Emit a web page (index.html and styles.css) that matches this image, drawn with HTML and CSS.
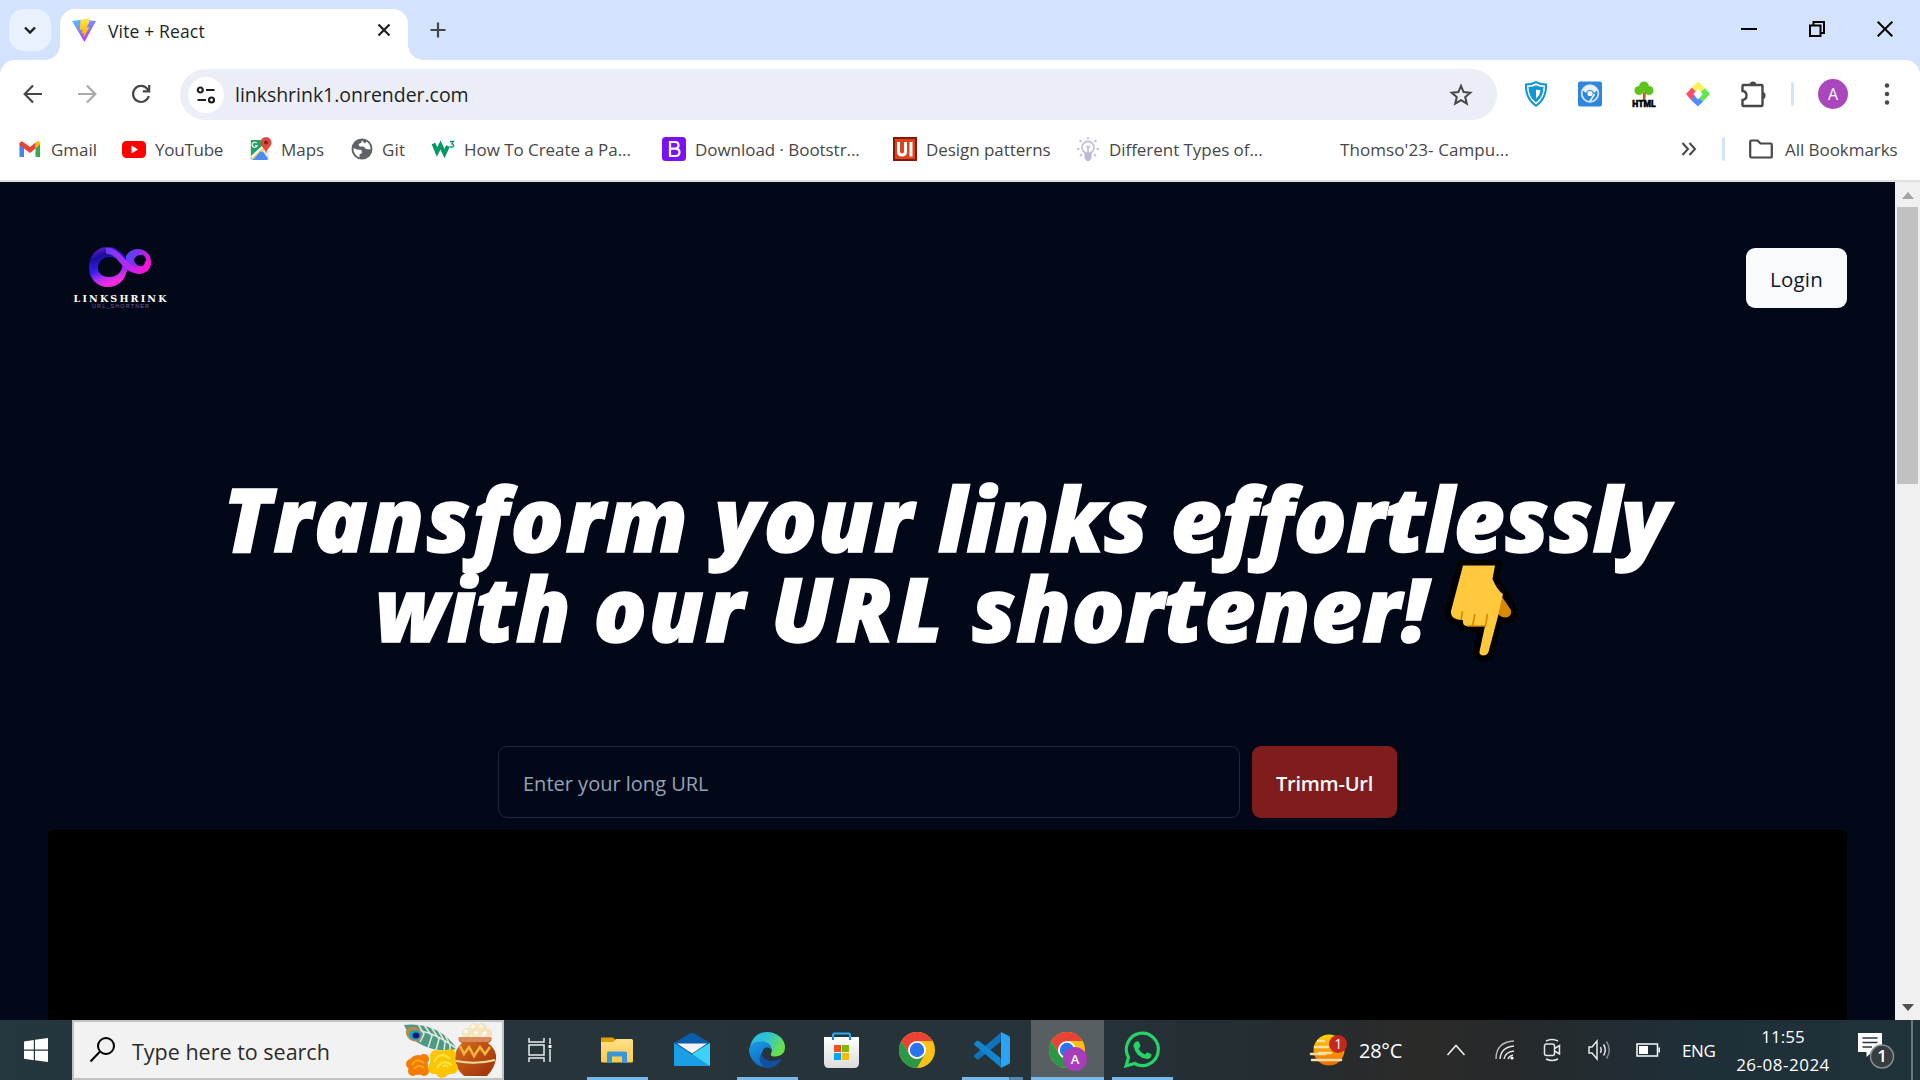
FILE: index.html
```html
<!DOCTYPE html>
<html lang="en">
<head>
<meta charset="utf-8">
<title>Vite + React</title>
<link rel="stylesheet" href="styles.css">
</head>
<body>
<svg class="defs" width="0" height="0">
  <defs>
    <linearGradient id="viteA" x1="0" y1="0" x2=".6" y2="1"><stop offset="0" stop-color="#41d1ff"/><stop offset="1" stop-color="#bd34fe"/></linearGradient>
    <linearGradient id="viteB" x1="0" y1="0" x2="0" y2="1"><stop offset="0" stop-color="#ffea83"/><stop offset=".2" stop-color="#ffdd35"/><stop offset="1" stop-color="#ffa800"/></linearGradient>
    <linearGradient id="loopA" x1="0" y1="0" x2=".35" y2="1"><stop offset="0" stop-color="#7a2be8"/><stop offset=".3" stop-color="#1c0c9c"/><stop offset=".6" stop-color="#3a1cf0"/><stop offset=".8" stop-color="#b02cf0"/><stop offset="1" stop-color="#ff2be0"/></linearGradient>
    <linearGradient id="loopB" x1="0" y1="0" x2="1" y2="0"><stop offset="0" stop-color="#6a3cf0"/><stop offset=".45" stop-color="#b02cf0"/><stop offset="1" stop-color="#ff10d8"/></linearGradient>
    <linearGradient id="loopC" x1="0" y1="0" x2="1" y2=".5"><stop offset="0" stop-color="#3a4cf8"/><stop offset=".5" stop-color="#8a2cf0"/><stop offset="1" stop-color="#ff10d8"/></linearGradient>
    <linearGradient id="edgeA" x1="0" y1="0" x2="1" y2=".4"><stop offset="0" stop-color="#2fb6ec"/><stop offset=".5" stop-color="#2cc3d8"/><stop offset="1" stop-color="#6be04f"/></linearGradient>
    <linearGradient id="edgeB" x1="0" y1="0" x2=".6" y2="1"><stop offset="0" stop-color="#1b9de2"/><stop offset="1" stop-color="#0c66c4"/></linearGradient>
    <linearGradient id="sun" x1="0" y1="0" x2="0" y2="1"><stop offset="0" stop-color="#ffd000"/><stop offset="1" stop-color="#ee6a00"/></linearGradient>
    <linearGradient id="folder" x1="0" y1="0" x2="0" y2="1"><stop offset="0" stop-color="#ffe08a"/><stop offset="1" stop-color="#fccb45"/></linearGradient>
    <linearGradient id="bag" x1="0" y1="0" x2="0" y2="1"><stop offset="0" stop-color="#fff"/><stop offset="1" stop-color="#dcdcdc"/></linearGradient>
    <linearGradient id="pot" x1="0" y1="0" x2="1" y2="1"><stop offset="0" stop-color="#d9701f"/><stop offset="1" stop-color="#9c2d08"/></linearGradient>
    <symbol id="chrome" viewBox="0 0 36 36">
      <circle cx="18" cy="18" r="18" fill="#fbc116"/>
      <path d="M2.4 9A18 18 0 0 1 33.6 9L18 9 10.2 13.5 10.2 22.5Z" fill="#ea4335"/>
      <path d="M2.4 9 10.2 22.5 14 26 18 27 25.8 22.5 18 36A18 18 0 0 1 2.4 9Z" fill="#2a9846"/>
      <circle cx="18" cy="18" r="9" fill="#fff"/><circle cx="18" cy="18" r="7.2" fill="#2b74ee"/>
    </symbol>
  </defs>
</svg>

<header class="tabstrip">
  <div class="tab-search"><svg width="14" height="9" viewBox="0 0 14 9"><path d="M2 1.5 7 6.5 12 1.5" fill="none" stroke="#1f1f1f" stroke-width="2.4"/></svg></div>
  <div class="tab">
    <svg width="24" height="24" viewBox="0 0 24 24"><path d="M0 3 11 1.5 24 3 12.4 24Z" fill="url(#viteA)"/><path d="M17 0 8.5 1.6 7.8 12 10.4 11.5 9.8 15.5 12 15 11.4 20 17.3 9.2 14.6 9.5 17.4 3.8Z" fill="url(#viteB)"/></svg>
    <span class="tab-title">Vite + React</span>
    <svg class="tab-close" width="14" height="14" viewBox="0 0 14 14"><path d="M1.5 1.5 12.5 12.5M12.5 1.5 1.5 12.5" stroke="#1f1f1f" stroke-width="2.2"/></svg>
  </div>
  <svg class="new-tab" width="16" height="16" viewBox="0 0 16 16"><path d="M8 .5V15.500M.5 8H15.500" stroke="#444746" stroke-width="2.2"/></svg>
  <div class="window-buttons">
    <svg width="16" height="16" viewBox="0 0 16 16"><path d="M0 8H16" stroke="#000" stroke-width="2"/></svg>
    <svg width="16" height="16" viewBox="0 0 16 16"><path d="M1 4.500H11.500V15H1ZM4.500 4V1H15V12H12" fill="none" stroke="#000" stroke-width="2"/></svg>
    <svg width="16" height="16" viewBox="0 0 16 16"><path d="M.7.700 15.300 15.300M15.300.700.700 15.300" stroke="#000" stroke-width="2"/></svg>
  </div>
</header>

<div class="strip-bg">
<nav class="toolbar">
  <svg class="nav-icon" width="20" height="20" viewBox="0 0 20 20"><path d="M10 1.500 1.700 10 10 18.500M2 10H19" fill="none" stroke="#474747" stroke-width="2.2"/></svg>
  <svg class="nav-icon" width="20" height="20" viewBox="0 0 20 20"><path d="M10 1.500 18.300 10 10 18.500M18 10H1" fill="none" stroke="#a9a9a9" stroke-width="2.2"/></svg>
  <svg class="nav-icon" width="20" height="20" viewBox="0 0 20 20"><path d="M17.800 12A8 8 0 1 1 16.500 5.200L18 7M18.200 1V7.400H11.800" fill="none" stroke="#474747" stroke-width="2.200"/></svg>
  <div class="omnibox">
    <div class="site-info"><svg width="20" height="18" viewBox="0 0 20 18"><g fill="none" stroke="#1f1f1f" stroke-width="2.200"><circle cx="4.300" cy="4" r="2.500"/><path d="M10 4H18.500M1.500 14H10"/><circle cx="15.500" cy="14" r="2.500"/></g></svg></div>
    <span class="url">linkshrink1.onrender.com</span>
    <svg class="star" width="24" height="24" viewBox="0 0 24 24"><path d="M12 2.800 14.600 9.100 21.300 9.700 16.200 14.100 17.800 20.700 12 17.100 6.200 20.700 7.800 14.100 2.700 9.700 9.400 9.100Z" fill="none" stroke="#474747" stroke-width="2"/></svg>
  </div>
  <div class="extensions">
    <svg width="24" height="26" viewBox="0 0 24 26"><path d="M1 2.500Q7 2.500 12 0 17 2.500 23 2.500 24 18 12 26 0 18 1 2.500Z" fill="#1296d8"/><path d="M3 4.500Q8 4.500 12 2.300 16 4.500 21 4.500 21.500 16.500 12 23.500 2.500 16.500 3 4.500Z" fill="#fff"/><path d="M4.500 6Q9.500 6 12 4.200 14.500 6 19.500 6 19.500 16 12 21.500 4.500 16 4.500 6Z" fill="#1296d8"/><path d="M12 8.500Q14 9.300 16.500 9.300 16 14.500 12 17.500Z" fill="#fff"/></svg>
    <svg width="24" height="26" viewBox="0 0 24 26"><rect y=".5" width="24" height="25" rx="2" fill="#2f86e0"/><circle cx="12" cy="12.500" r="8.300" fill="#2f86e0" stroke="#d7e6f7" stroke-width="1.800"/><path d="M4.500 9A8.300 8.300 0 0 1 19.500 9L16 12A4.200 4.200 0 0 0 8 12Z" fill="#e8f1fb"/><circle cx="12" cy="12.500" r="2.600" fill="#fff"/><path d="M16.500 13 11.500 21" stroke="#e8f1fb" stroke-width="1.800"/></svg>
    <svg width="24" height="26" viewBox="0 0 24 26"><g fill="#5cc41a"><circle cx="12" cy="5.500" r="5"/><circle cx="7" cy="9.500" r="4.500"/><circle cx="17" cy="9.500" r="4.500"/></g><path d="M10.800 9 12 12 14 9 13.400 20H10.900Z" fill="#b5651d"/><text x="12" y="25.500" class="ext-html">HTML</text></svg>
    <svg width="24" height="26" viewBox="0 0 24 26"><path d="M0 13 6 6.500 11 11.500 9 13.500 10 15 5 19Z" fill="#fb4d69"/><path d="M6 6.500 12 .500 19 7.500 15.500 12 12 9 9.500 10Z" fill="#fff04d"/><path d="M19 7.500 24 13 17 20.500 13 17 16.500 13 14.500 11Z" fill="#5fe750"/><path d="M5 19 8.500 14.500 12 17.500 13 17 17 20.500 12 25.500Z" fill="#4f8dfb"/><path d="M12 7.500 16.500 13 12 18.500 7.500 13Z" fill="#fff"/></svg>
    <svg width="26" height="28" viewBox="0 0 26 28"><path d="M3.500 5H21.500Q22.500 5 22.500 6V12 25Q22.500 26 21.500 26H3.500Q2.500 26 2.500 25V20Q6.500 19.500 6.500 15.500T2.500 11V6Q2.500 5 3.500 5Z" fill="none" stroke="#474747" stroke-width="2.400"/><path d="M9.500 5A3.400 3.600 0 0 1 16.300 5ZM22.500 12A3 3.400 0 0 1 22.500 19Z" fill="#474747"/></svg>
    <i class="divider"></i>
    <span class="avatar">A</span>
    <svg class="dots" width="6" height="24" viewBox="0 0 6 24"><g fill="#474747"><circle cx="3" cy="3.500" r="2.200"/><circle cx="3" cy="12" r="2.200"/><circle cx="3" cy="20.500" r="2.200"/></g></svg>
  </div>
</nav>

<nav class="bookmarks">
  <div class="bm bm-gmail"><svg width="24" height="24" viewBox="0 0 24 24"><path d="M1.500 6V20H6V10Z" fill="#4285f4"/><path d="M22 6V20H17.500V10Z" fill="#34a853"/><path d="M17.500 5.500 20 4Q22 4 22 7L17.500 12Z" fill="#fbbc04"/><path d="M1.500 7Q1.500 4 4.500 4.500L12 10 17.500 5.500V11.500L12 16 6 11.500 1.500 8Z" fill="#ea4335"/></svg><span>Gmail</span></div>
  <div class="bm bm-youtube"><svg width="24" height="24" viewBox="0 0 24 24"><rect y="4" width="24" height="17" rx="4.500" fill="#f00"/><path d="M9.500 8.500 16 12.500 9.500 16.500Z" fill="#fff"/></svg><span>YouTube</span></div>
  <div class="bm bm-maps"><svg width="24" height="24" viewBox="0 0 24 24"><rect x="2" y="3" width="19" height="20" rx="1.500" fill="#e8e8e8"/><path d="M3 3H16L15 12 3 21Z" fill="#1fa463"/><path d="M3 21 13 12 20 21.500 18 23H5Z" fill="#4b8bf5"/><path d="M3 19 16 7 18 9 4 22Z" fill="#fff"/><path d="M4 21 17 9 18.500 11 6 22.500Z" fill="#fcd347"/><path d="M5 23 12.500 14 20 23Z" fill="#4b8bf5"/><path d="M8.600 6.200A2.500 2.500 0 1 0 9 8.500H7" fill="none" stroke="#fff" stroke-width="1.200"/><path d="M18 0A5.500 5.500 0 0 1 23.500 6C23.500 10 18.500 11 18 17 17.500 11 12.500 10 12.500 6A5.500 5.500 0 0 1 18 0Z" fill="#dd4b3e"/><circle cx="18" cy="5.500" r="2" fill="#7d231c"/></svg><span>Maps</span></div>
  <div class="bm bm-git"><svg width="24" height="24" viewBox="0 0 24 24"><circle cx="13" cy="12" r="10.500" fill="#5f6368"/><path d="M4.500 11 8 12.500 12.500 13 13 16 10.500 17.500 10.500 20.500A9 9 0 0 1 4.500 11ZM13 3.500 12 6 9.500 7 10.500 9.500 14.500 9.500 17 12 21.500 12.500A9 9 0 0 0 17.500 4.500L16 6.500Z" fill="#fff"/></svg><span>Git</span></div>
  <div class="bm bm-long"><svg width="24" height="24" viewBox="0 0 24 24"><path d="M2.500 6.500 6 15 9.500 8 13.500 16.500 17 9" fill="none" stroke="#059862" stroke-width="4"/><path d="M19 4.500H22.500L20.800 6.800Q23.300 7.500 22.500 9.300 21 10.700 19 9.600" fill="none" stroke="#059862" stroke-width="1.300"/></svg><span>How To Create a Pa...</span></div>
  <div class="bm bm-long"><svg width="24" height="24" viewBox="0 0 24 24"><rect width="24" height="24" rx="3.500" fill="#7a12f5"/><path d="M8 5H13Q16.500 5 16.500 8.300T13 11.600H8ZM8 11.600H13.500Q17.500 11.600 17.500 15.300T13.500 19H8Z" fill="none" stroke="#fff" stroke-width="2.200"/></svg><span>Download · Bootstr...</span></div>
  <div class="bm bm-design"><svg width="24" height="24" viewBox="0 0 24 24"><rect width="24" height="24" fill="#7f1a08"/><rect x="2" y="2" width="20" height="20" fill="#dd431c"/><path d="M5.500 5V14.500Q5.500 18 9 18T12.500 14.500V5M18 5V19.500" fill="none" stroke="#fff" stroke-width="3"/></svg><span>Design patterns</span></div>
  <div class="bm bm-long"><svg width="24" height="24" viewBox="0 0 24 24"><g fill="none" stroke="#c3c3da" stroke-width="1.800"><circle cx="12" cy="10.500" r="6"/><path d="M12 0V2.500M3.500 3 5.500 5M20.500 3 18.500 5M1 12H3.500M20.500 12H23M4 19 6 17M20 19 18 17M10.500 9 12 11 14 9M12 11V16"/></g><path d="M8.500 16H15.500V21L13.500 24H10.500L8.500 21Z" fill="#b9b9d2"/></svg><span>Different Types of...</span></div>
  <div class="bm bm-blank"><span>Thomso'23- Campu...</span></div>
  <div class="bm-end">
    <svg width="16" height="16" viewBox="0 0 16 16"><path d="M1.500 2 7 8 1.500 14M8.500 2 14 8 8.500 14" fill="none" stroke="#474747" stroke-width="2"/></svg>
    <i class="divider"></i>
    <svg class="folder" width="24" height="20" viewBox="0 0 24 20"><path d="M2.500 1.500H8.500L11.500 4.500H21.500Q22.800 4.500 22.800 5.800V17Q22.800 18.500 21.500 18.500H2.500Q1.200 18.500 1.200 17V3Q1.200 1.500 2.500 1.500Z" fill="none" stroke="#474747" stroke-width="2.200"/></svg>
    <span class="all">All Bookmarks</span>
  </div>
</nav>
</div>

<div class="viewport">
  <main class="page">
    <div class="page-head">
      <svg class="logo" width="108" height="76" viewBox="0 0 108 76">
        <path d="M52 35C58 32 60 28 62 24" fill="none" stroke="#d020d8" stroke-width="1.200"/>
        <path fill-rule="evenodd" d="M42 3C53 3 61 11 61 23 61 35 53 43 42 43 31 43 23 35 23 23 23 11 31 3 42 3ZM44 13C36 13 32 18 32 24 32 29 36 33 43 33 51 33 56 28 56 22 56 17 51 13 44 13Z" fill="url(#loopA)"/>
        <path fill-rule="evenodd" d="M60 12C63 7 67 5 72 5 80 5 85 11 85 18 85 25 80 30 73 30 68 30 63 26 60 20ZM75 11C71 11 69 13 68 16 69 20 72 22 75 22 78 22 80 20 80 16.500 80 13 78 11 75 11Z" fill="url(#loopC)"/>
        <path d="M40 7C54 5 57 27 73 26.500 79 26 82 22 82 17" fill="none" stroke="url(#loopB)" stroke-width="6"/>
        <text class="logo-name" x="7.500" y="57.500" textLength="93">LINKSHRINK</text>
        <text class="logo-sub" x="26" y="64" textLength="57">URL_SHORTNER</text>
      </svg>
      <button class="login">Login</button>
    </div>
    <h1 class="headline">
      <span class="line line-1"><span class="open-set">Transform </span><span>your </span><span class="tight">links effortlessly</span></span>
      <span class="line line-2"><span class="tight">with </span><span class="open-set">our </span><span class="wide-set">URL </span><span class="snug">shortener!</span><svg class="hand" width="80" height="108" viewBox="0 0 80 108"><path d="M22 10H54L51 24 62 39 70 54Q71 61 65 61.500 60 61.500 57 58L47.500 96Q46 99.500 42 99.500 38 99 38.500 95.500L44 70H26Q21 69.500 22 64 17 64.500 13 62 9.500 60 10 55Z" fill="#000" stroke="#000" stroke-width="12"/><path d="M59 38 70 54Q71 61 65 61.500 60 61.500 57 58Z" fill="#d68a00"/><path d="M22 9.500H54L51.500 23Q56 34 62 38L56.500 62 47.500 96Q46 99.500 42 99.500 38 99 38.500 95.500L44 70H26Q21 69.500 22 64 17 64.500 13 62 9.500 60 10 55Z" fill="#ffc83d"/><path d="M21.500 55 20 64M34 58 31.500 70M46.500 58 44.500 70H26" fill="none" stroke="#d68a00" stroke-width="1.600"/></svg></span>
    </h1>
    <form class="shorten">
      <div class="field">Enter your long URL</div>
      <div class="trim">Trimm-Url</div>
    </form>
    <div class="video"></div>
  </main>
  <div class="scrollbar">
    <svg width="12" height="7" viewBox="0 0 12 7"><path d="M0 7 6 0 12 7Z" fill="#a3a3a3"/></svg>
    <div class="thumb"></div>
    <svg class="down" width="12" height="7" viewBox="0 0 12 7"><path d="M0 0H12L6 7Z" fill="#505050"/></svg>
  </div>
</div>

<footer class="taskbar">
  <div class="start"><svg width="24" height="24" viewBox="0 0 24 24"><path d="M0 3.400 9.800 2V11.500H0ZM11 1.800 24 0V11.500H11ZM0 12.700H9.800V22.200L0 20.700ZM11 12.700H24V24L11 22.300Z" fill="#fff"/></svg></div>
  <div class="search">
    <svg width="26" height="26" viewBox="0 0 26 26"><g fill="none" stroke="#000" stroke-width="2"><circle cx="16" cy="9" r="8"/><path d="M10 14.500.500 24.500"/></g></svg>
    <span class="search-text">Type here to search</span>
    <svg class="festive" width="96" height="56" viewBox="0 0 96 56">
      <path d="M2 3Q20 1 36 9 48 16 55 27 36 31 20 23 8 18 2 3Z" fill="#4d9a84"/>
      <path d="M10 8Q30 8 55 27M16 2 22 12 18 20M22 3 30 14 26 26M29 5 37 17 34 28M36 8 43 20 42 29M43 13 48 23 48 29" fill="none" stroke="#dfe8dc" stroke-width="1.600"/>
      <ellipse cx="12" cy="12" rx="8.500" ry="7" fill="#b58a50" transform="rotate(35 12 12)"/><ellipse cx="13" cy="13" rx="6" ry="5" fill="#1fa5b0"/><ellipse cx="14" cy="13.500" rx="3.500" ry="3" fill="#101a8c"/>
      <g fill="#f4e3bd"><circle cx="65" cy="11" r="5"/><circle cx="72" cy="6" r="5"/><circle cx="80" cy="6" r="5"/><circle cx="86" cy="11" r="4.500"/><circle cx="75" cy="12" r="5"/></g>
      <g fill="#fff8e4"><circle cx="64" cy="9.500" r="2"/><circle cx="71" cy="4.500" r="2"/><circle cx="79" cy="4.500" r="2"/><circle cx="74" cy="11" r="2"/><circle cx="83" cy="11" r="2"/></g>
      <path d="M57 15H89Q91 19 86 21 95 28 94 37 92 47 85 54H62Q53 46 53 36 53 27 60 21 55 19 57 15Z" fill="url(#pot)"/>
      <path d="M57 15H89Q90 19 86 20H60Q56 19 57 15Z" fill="#d98a5a"/>
      <path d="M58 24 62 32 67 25 72 34 78 25 83 32 88 25" fill="none" stroke="#f6b73c" stroke-width="2.500"/><path d="M54 39Q74 43 93 38" fill="none" stroke="#f6dd9a" stroke-width="2"/>
      <g fill="#f57c00"><circle cx="16" cy="43" r="10"/><circle cx="9" cy="42" r="5"/><circle cx="22" cy="37" r="5"/><circle cx="11" cy="49" r="5"/><circle cx="22" cy="49" r="5"/></g><path d="M10 43Q15 35 22 41M12 47Q17 41 22 46" fill="none" stroke="#ffa51f" stroke-width="2"/>
      <g fill="#fdc500"><circle cx="41" cy="41" r="13"/><circle cx="32" cy="46" r="6"/><circle cx="34" cy="34" r="6"/><circle cx="48" cy="33" r="6"/><circle cx="50" cy="46" r="6"/><circle cx="40" cy="50" r="6"/></g><path d="M32 40Q38 28 48 37M35 46Q41 36 50 43M41 45Q43 42 46 45" fill="none" stroke="#ffe34a" stroke-width="2.200"/>
    </svg>
  </div>
  <div class="taskview"><svg width="24" height="24" viewBox="0 0 24 24"><g fill="none" stroke="#e8ebec" stroke-width="1.500"><path d="M1 0V4H16V0M1 24V20H16V24M1 7H16V17H1ZM22 0V6M22 11V24"/></g><rect x="20.500" y="7" width="3" height="3" fill="#fff"/></svg></div>
  <div class="apps">
    <div class="app open"><svg width="36" height="36" viewBox="0 0 36 36"><path d="M2 5.500H14L16.500 8V12H2Z" fill="#e0a100"/><path d="M2 10H14L17 7H32.500Q34 7 34 8.500V29Q34 30.500 32.500 30.500H3.500Q2 30.500 2 29Z" fill="url(#folder)"/><path d="M8 31V21Q8 19.500 9.500 19.500H26.500Q28 19.500 28 21V31H23V24.500H13V31Z" fill="#3a95dd"/></svg></div>
    <div class="app"><svg width="36" height="36" viewBox="0 0 36 36"><path d="M0 11 15 2Q18 0 21 2L36 11V20H0Z" fill="#0b5cab"/><path d="M0 11 18 23 36 11V34H0Z" fill="#19a4ea"/><path d="M36 11 18 22 36 34Z" fill="#3fd2f8"/><path d="M0 11 36 34H0Z" fill="#1a9fe6"/><path d="M3 11.500H33L18 21.500Z" fill="#f4f4f4"/></svg></div>
    <div class="app open"><svg width="36" height="36" viewBox="0 0 36 36"><path d="M1 15C3 5 10 0 18 0 28 0 36 7 36 15 36 21 32 24.500 26 24.500 22 24.500 21 23 22.500 20.500 24 16 20 12 14 12 8 12 3 14 0 19Z" fill="url(#edgeA)"/><path d="M0 18C1 11 7 9 13 9.500 20 10 23 14 22.500 18 20 14 14 15 13 21 12 28 18 33 26 34 13 39 1 31 0 18Z" fill="url(#edgeB)"/><path d="M13 21C13 29 23 31 33 26.500 30 32 25 36 18 36 10 34 9 25 13 21Z" fill="#124f9e"/></svg></div>
    <div class="app"><svg width="36" height="36" viewBox="0 0 36 36"><path d="M9 8V3Q9 1.500 10.500 1.500H24.500Q26 1.500 26 3V8" fill="none" stroke="#27aef2" stroke-width="2"/><path d="M0 5H35V31Q35 36 30 36H5Q0 36 0 31Z" fill="url(#bag)"/><path d="M9 5V8M26 5V8" stroke="#1488d8" stroke-width="2"/><path d="M10 13H17V20H10Z" fill="#f25022"/><path d="M18 13H25V20H18Z" fill="#7fba00"/><path d="M10 21H17V28H10Z" fill="#00a4ef"/><path d="M18 21H25V28H18Z" fill="#ffb900"/></svg></div>
    <div class="app"><svg width="36" height="36"><use href="#chrome"/></svg></div>
    <div class="app open multi"><svg width="36" height="36" viewBox="0 0 36 36"><path d="M27 .500 26.500 10 5 27Q3.500 28 2.500 27L.500 25Q-.500 24 .500 23Z" fill="#0f74bd"/><path d="M27 35.500 26.500 26 5 9Q3.500 8 2.500 9L.500 11Q-.500 12 .500 13Z" fill="#1485cf"/><path d="M27 0 35 4Q36 4.500 36 6V30Q36 31.500 35 32L27 36Z" fill="#2ba3f2"/></svg></div>
    <div class="app open active"><svg width="36" height="36"><use href="#chrome"/></svg><span class="badge">A</span></div>
    <div class="app open"><svg width="36" height="36" viewBox="0 0 36 36"><path d="M2 34 4.500 25.500A16 16.200 0 1 1 10.500 31.500Z" fill="none" stroke="#25d366" stroke-width="3.200"/><path d="M12.500 9.500Q14.500 9 15 10L16.500 13.500Q16.500 15 14.500 16.500 17 21 21 22.500L23.200 20.200 27.500 22.200Q27.500 26.500 23.500 27 12 26 9.500 14 9.500 11 12.500 9.500Z" fill="#25d366"/></svg></div>
  </div>
  <div class="tray">
    <div class="weather"><svg width="37" height="32" viewBox="0 0 37 32"><circle cx="18" cy="16" r="15.500" fill="url(#sun)"/><path d="M7 7H13M4 13H17M8 19H20M0 20H14M1 26H30" stroke="#f6dfa8" stroke-width="2.600" stroke-linecap="round"/><circle cx="27" cy="10" r="9" fill="#c4271b"/><text x="27" y="15" class="wx-count">1</text></svg><span class="temp">28°C</span></div>
    <svg class="t-chev" width="20" height="12" viewBox="0 0 20 12"><path d="M1.500 11 10 1.500 18.500 11" fill="none" stroke="#f0f0f0" stroke-width="1.600"/></svg>
    <svg class="t-wifi" width="20" height="20" viewBox="0 0 20 20"><g fill="none" stroke="#e6e8e9" stroke-width="1.400"><path d="M1 19Q1 2 19 1" opacity=".75"/><path d="M5 19Q6 7 19 6M9 19Q10 12 19 11M13 19Q14 16 18 15"/></g><circle cx="17" cy="18" r="1.600" fill="#fff"/></svg>
    <svg class="t-meet" width="18" height="24" viewBox="0 0 18 24"><g fill="none" stroke="#e6e8e9" stroke-width="1.500"><rect x="1.500" y="6" width="10" height="11.500" rx="2"/><path d="M11.500 10.500 16.500 7.500V16L11.500 13M3 3Q9 0 15 3M3 21Q9 24 15 21"/></g></svg>
    <svg class="t-sound" width="24" height="22" viewBox="0 0 24 22"><g fill="none" stroke="#e6e8e9" stroke-width="1.500"><path d="M1 8H4L9 2V20L4 14H1ZM12.500 8Q14 11 12.500 14M15.500 5.500Q19 11 15.500 16.500"/><path d="M18.500 2.500Q24 11 18.500 19.500" opacity=".5"/></g></svg>
    <svg class="t-batt" width="24" height="14" viewBox="0 0 24 14"><path d="M1 1H21.500V13H1Z" fill="none" stroke="#fff" stroke-width="1.500"/><rect x="3" y="3" width="9" height="8" fill="#fff"/><path d="M23.200 4.500V9.500" stroke="#fff" stroke-width="1.500"/></svg>
    <span class="lang">ENG</span>
    <div class="clock"><span>11:55</span><span class="date">26-08-2024</span></div>
    <svg class="notice" width="36" height="38" viewBox="0 0 36 38"><path d="M0 1H24V20H14L8.500 25 8.500 20H0Z" fill="#fff"/><path d="M4.500 6H19.500M4.500 10.500H19.500M4.500 15H14" stroke="#2a363b" stroke-width="1.500"/><circle cx="24" cy="24.500" r="11.500" fill="#383e40" stroke="#8b8f91" stroke-width="1.500"/><text x="24" y="30" class="notice-count">1</text></svg>
    <i class="peek"></i>
  </div>
</footer>
</body>
</html>
```
FILE: styles.css
```css
* { box-sizing: border-box; }
body { margin: 0; width: 1920px; height: 1080px; overflow: hidden; display: flex; flex-direction: column; font-family: "Open Sans", "Noto Sans", sans-serif; background: #020817; }
svg { display: block; flex: none; overflow: visible; }
.defs { position: absolute; }
span { white-space: nowrap; }

.tabstrip { height: 60px; flex: none; background: #d3e3fd; display: flex; align-items: flex-start; padding: 9px 12px 0 9px; }
.tab-search { width: 42px; height: 42px; border-radius: 15px; background: #e9f1fe; display: flex; align-items: center; justify-content: center; }
.tab { position: relative; width: 348px; height: 51px; margin-left: 9px; padding: 0 17px 9px 12px; background: #fff; border-radius: 15px 15px 0 0; display: flex; align-items: center; }
.tab::before, .tab::after { content: ""; position: absolute; bottom: 0; width: 15px; height: 15px; }
.tab::before { left: -15px; background: radial-gradient(circle at 0 0, transparent 14.5px, #fff 15px); }
.tab::after { right: -15px; background: radial-gradient(circle at 100% 0, transparent 14.5px, #fff 15px); }
.tab-title { margin-left: 12px; font-size: 17.5px; letter-spacing: .15px; color: #1f1f1f; padding-top: 2px; }
.tab-close { margin-left: auto; }
.new-tab { margin: 13px 0 0 22px; }
.window-buttons { margin: 12px 15px 0 auto; display: flex; gap: 52px; }

.strip-bg { flex: none; height: 122px; background: #d3e3fd; }
.toolbar { height: 60px; padding: 9px 0 0 23px; background: #fff; border-radius: 15px 15px 0 0; display: flex; }
.nav-icon { margin: 15px 34px 0 0; }
.omnibox { width: 1317px; height: 51px; margin-left: -5px; padding: 0 24px 0 8px; border-radius: 26px; background: #ebeef7; display: flex; align-items: center; }
.site-info { width: 36px; height: 36px; border-radius: 50%; background: #fff; display: flex; align-items: center; justify-content: center; }
.url { margin-left: 11px; font-size: 19.5px; letter-spacing: -.03px; color: #1f1f1f; }
.star { margin-left: auto; }
.extensions { display: flex; align-items: center; height: 50px; margin-left: 27px; gap: 30px; }
.ext-html { font: 900 8.5px "Roboto", sans-serif; text-anchor: middle; stroke: #000; stroke-width: .5px; }
.divider { width: 3px; height: 24px; border-radius: 2px; background: #d3e3fd; }
.extensions .divider { margin-left: -5px; }
.avatar { width: 30px; height: 30px; margin-left: -6px; border-radius: 50%; background: #ab47bc; color: #fff; font-size: 16px; line-height: 30px; text-align: center; }
.dots { margin-left: 6px; }

.bookmarks { height: 62px; padding: 0 22px 2px 18px; background: #fff; border-bottom: 2px solid #e0e0e0; display: flex; align-items: center; gap: 25px; font-size: 17px; letter-spacing: -.05px; color: #474747; }
.bm { display: flex; align-items: center; gap: 9px; }
.bm-gmail { width: 79px; }
.bm-youtube { width: 101px; letter-spacing: -.25px; }
.bm-maps { width: 76px; }
.bm-git { width: 57px; letter-spacing: .2px; }
.bm-long { width: 206px; }
.bm-design { width: 158px; }
.bm-blank { padding-left: 33px; letter-spacing: .09px; }
.bm-end { width: 217px; margin-left: auto; display: flex; align-items: center; }
.bm-end .divider { margin-left: 25px; }
.bm-end .folder { margin: 0 12px 0 24px; }

.viewport { height: 838px; flex: none; display: flex; }
.page { width: 1895px; padding: 53px 48px 0; display: flex; flex-direction: column; }
.page-head { display: flex; justify-content: space-between; height: 90px; padding: 13px 0 0 18px; }
.logo { margin-top: -4px; }
.logo-name { font: 700 9.5px "DejaVu Serif", serif; fill: #fff; }
.logo-sub { font: 5.5px "Liberation Sans", sans-serif; fill: #7b5a9e; }
.login { width: 101px; height: 60px; border: 0; border-radius: 9px; background: #f8fafc; color: #0f172a; font: 500 20.5px "Open Sans", sans-serif; letter-spacing: .2px; padding: 2px 0 0; }
.headline { margin: 148px 0 0; font-size: 88px; font-weight: 800; font-style: italic; line-height: 90px; color: #fff; height: 180px; display: flex; flex-direction: column; -webkit-text-stroke: 1.4px #fff; }
.line { display: flex; height: 90px; white-space: pre; }
.line span { white-space: pre; }
.line-1 { padding-left: 175px; letter-spacing: 1.2px; }
.line-2 { padding-left: 327px; }
.tight { letter-spacing: -.1px; }
.snug { letter-spacing: .35px; }
.open-set { letter-spacing: 2px; }
.wide-set { letter-spacing: 3.2px; }
.hand { margin: -7px 0 0 13px; }
.shorten { margin: 93px 0 0 450px; display: flex; gap: 12px; height: 72px; }
.field { width: 742px; height: 72px; border: 1px solid #1e293b; border-radius: 9px; padding: 3px 0 0 24px; display: flex; align-items: center; font-size: 20px; color: #94a3b8; }
.trim { width: 145px; height: 72px; border-radius: 9px; background: #7f1d1d; color: #f8fafc; display: flex; align-items: center; justify-content: center; font-size: 20px; font-weight: 600; letter-spacing: -.24px; padding-top: 3px; }
.video { margin-top: 12px; flex: 1; background: #000; border-radius: 6px 6px 0 0; }
.scrollbar { width: 25px; background: #f0f0f0; display: flex; flex-direction: column; align-items: center; padding: 10px 0 9px; }
.thumb { width: 21px; height: 277px; margin-top: 8px; background: #c1c1c1; }
.down { margin-top: auto; }

.taskbar { height: 60px; flex: none; display: flex; background: linear-gradient(90deg, #25363e 0, #27343a 30%, #26343a 55%, #242d32 66%, #2b2a29 74%, #25292b 79%, #1f2f37 88%, #20323a 100%); color: #fff; }
.start { width: 72px; display: flex; align-items: center; justify-content: center; }
.search { width: 432px; border: 2px solid #c2c2c2; background: #f2f2f2; display: flex; align-items: center; padding: 0 4px 0 16px; }
.search-text { margin-left: 16px; padding-top: 3px; font-size: 21.5px; color: #2b2b2b; }
.festive { margin-left: auto; }
.taskview { width: 75px; padding-left: 24px; display: flex; align-items: center; }
.apps { display: flex; }
.app { position: relative; width: 75px; display: flex; align-items: center; justify-content: center; }
.open::after { content: ""; position: absolute; left: 8px; bottom: 0; width: 61px; height: 3px; background: #76b9ed; }
.multi::after { background: linear-gradient(90deg, #76b9ed 47px, #476a82 47px, #5688ae 49px); }
.active { background: linear-gradient(90deg, transparent 2px, #575f62 2px); }
.active::after { left: 2px; width: 73px; }
.badge { position: absolute; left: 34px; top: 27px; width: 24px; height: 24px; border-radius: 50%; background: #a83dba; font-size: 13px; font-weight: 600; line-height: 24px; text-align: center; }
.tray { flex: 1; display: flex; align-items: center; padding-left: 132px; }
.weather { width: 135px; display: flex; align-items: center; gap: 11px; font-size: 20px; letter-spacing: -.26px; }
.wx-count { font: 14px "Open Sans", sans-serif; fill: #fff; text-anchor: middle; }
.t-wifi { margin-left: 29px; }
.t-meet { margin-left: 28px; }
.t-sound { margin-left: 27px; }
.t-batt { margin-left: 24px; }
.lang { margin-left: 22px; font-size: 17px; letter-spacing: -.4px; width: 34px; }
.clock { margin-left: 20px; width: 94px; height: 60px; display: flex; flex-direction: column; align-items: center; font-size: 17px; line-height: 28px; padding-top: 3px; }
.date { letter-spacing: .5px; }
.notice { margin-left: 28px; margin-top: 2px; }
.notice-count { font: 600 17px "Open Sans", sans-serif; fill: #fff; text-anchor: middle; }
.peek { width: 2px; height: 60px; margin-left: 17px; background: #6d777c; }
```
